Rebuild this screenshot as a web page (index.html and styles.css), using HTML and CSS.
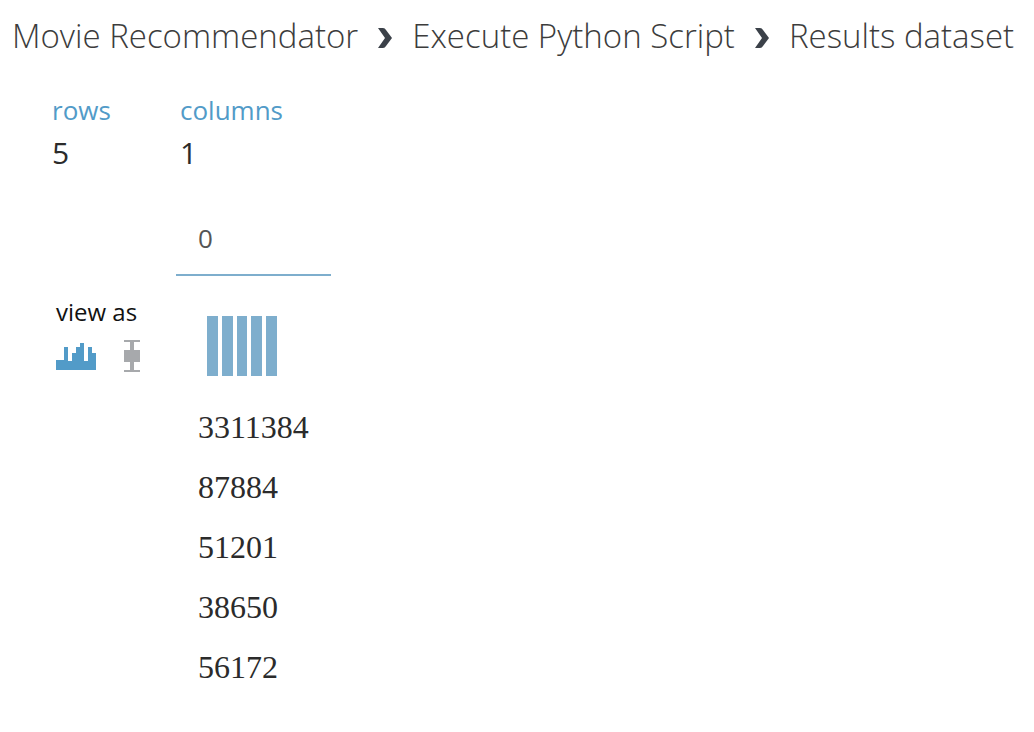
FILE: index.html
```html
<!DOCTYPE html>
<html lang="en">
<head>
<meta charset="utf-8">
<title>Results dataset</title>
<link rel="stylesheet" href="styles.css">
</head>
<body>
<nav class="breadcrumb" aria-label="Breadcrumb">
  <span>Movie Recommendator</span>
  <svg class="chevron" viewBox="0 0 14 20" aria-hidden="true"><path d="M0 0h5q2 0 3 2l6 8-6 8q-1 2-3 2H0l7-10z"/></svg>
  <span>Execute Python Script</span>
  <svg class="chevron" viewBox="0 0 14 20" aria-hidden="true"><path d="M0 0h5q2 0 3 2l6 8-6 8q-1 2-3 2H0l7-10z"/></svg>
  <span>Results dataset</span>
</nav>
<main class="content">
  <dl class="summary">
    <div class="stat"><dt>rows</dt><dd>5</dd></div>
    <div class="stat"><dt>columns</dt><dd>1</dd></div>
  </dl>
  <section class="dataset">
    <div class="view">
      <div class="view-label" id="view-label">view as</div>
      <div class="view-options" role="group" aria-labelledby="view-label">
        <button class="view-button" aria-label="Histogram">
          <svg class="histogram-icon" viewBox="0 0 40 27"><path d="M0 27V17h8V4h4v14h4v-8h4V4h4V0h4v18h4V4h4v6h4v17z"/></svg>
        </button>
        <button class="view-button" aria-label="Box plot">
          <svg class="box-icon" viewBox="0 0 18 32"><path d="M1 0h16v2h-6v8h6v12h-6v8h6v2H1v-2h6v-8H1V10h6V2H1z"/></svg>
        </button>
      </div>
    </div>
    <table class="data">
      <thead>
        <tr><th scope="col">0</th></tr>
        <tr><td class="chart-cell"><svg class="chart" viewBox="0 0 70 60" role="img" aria-label="Five equal bars"><path d="M0 0h11v60H0zM15 0h11v60H15zM30 0h10v60H30zM44 0h11v60H44zM59 0h11v60H59z"/></svg></td></tr>
      </thead>
      <tbody>
        <tr><td>3311384</td></tr>
        <tr><td>87884</td></tr>
        <tr><td>51201</td></tr>
        <tr><td>38650</td></tr>
        <tr><td>56172</td></tr>
      </tbody>
    </table>
  </section>
</main>
</body>
</html>
```
FILE: styles.css
```css
* { box-sizing: border-box; }
body {
  margin: 0;
  background: #fff;
  color: #2b2b2b;
  font-family: "Segoe UI", "Open Sans", "Noto Sans", sans-serif;
}
.breadcrumb {
  display: flex;
  align-items: center;
  gap: 20px;
  padding: 12px 12px 0;
  color: #3c3c3c;
  font-size: 33px;
  font-weight: 300;
  line-height: 48px;
  white-space: nowrap;
}
.chevron { width: 14px; height: 20px; margin-top: 4px; flex: none; fill: #3b4149; }
.content { padding: 30px 52px; }
.summary { display: flex; margin: 0; }
.stat { width: 128px; }
.stat dt { color: #529bc8; font-size: 26px; line-height: 40px; }
.stat dd { margin: 0; font-size: 30px; line-height: 46px; }
.dataset { display: flex; align-items: flex-start; padding-top: 32px; }
.view { width: 124px; padding: 88px 0 0 4px; }
.view-label { color: #111; font-size: 24px; line-height: 32px; }
.view-options { display: flex; align-items: center; gap: 27px; padding-top: 12px; }
.view-button { display: flex; padding: 0; border: 0; background: none; }
.histogram-icon { width: 40px; height: 27px; fill: #529bc8; }
.box-icon { width: 18px; height: 32px; fill: #a7a9ac; }
.data { min-width: 154px; border-spacing: 0; }
.data th {
  height: 68px;
  padding: 0 22px 6px;
  border-bottom: 2px solid #7eaecd;
  color: #555;
  font-size: 26px;
  font-weight: 400;
  text-align: left;
}
.data td {
  height: 60px;
  padding: 0 22px;
  font-family: "Liberation Serif", serif;
  font-size: 32px;
  line-height: 36px;
}
.data .chart-cell { height: 121px; padding: 40px 31px 21px; }
.chart { display: block; width: 70px; height: 60px; fill: #7eaecd; }
```
